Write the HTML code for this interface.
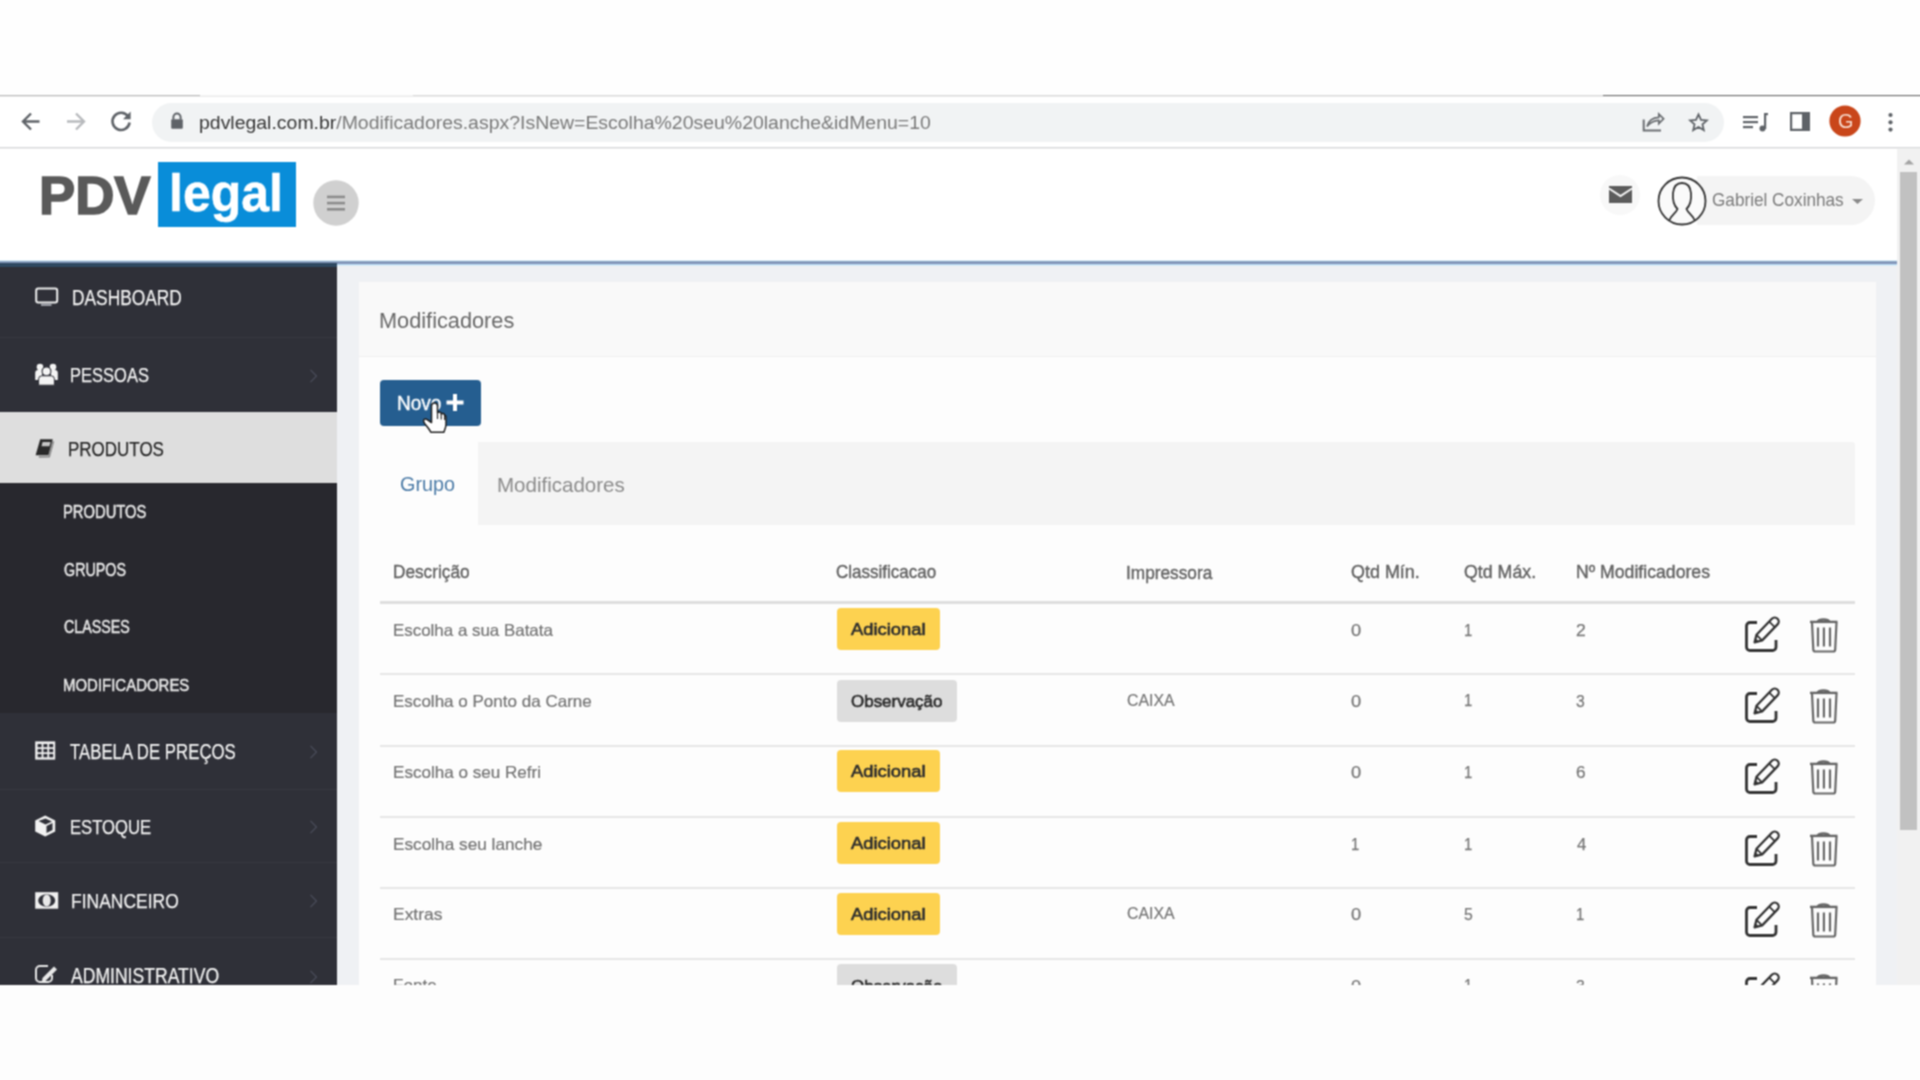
<!DOCTYPE html>
<html><head><meta charset="utf-8"><style>
*{margin:0;padding:0;box-sizing:border-box}
html,body{width:1920px;height:1080px;overflow:hidden;background:#fdfdfd;font-family:"Liberation Sans",sans-serif}
.a{position:absolute}
.t{position:absolute;white-space:nowrap;line-height:1;transform-origin:0 0}
svg{position:absolute;overflow:visible}
</style></head><body>
<svg width="0" height="0" style="position:absolute"><filter id="bl" x="0" y="0" width="100%" height="100%" color-interpolation-filters="sRGB"><feConvolveMatrix order="3" kernelMatrix="1 2 1 2 4 2 1 2 1" divisor="16" edgeMode="duplicate" preserveAlpha="true"/></filter></svg>
<div id="root" style="position:absolute;left:0;top:0;width:1920px;height:1080px;overflow:hidden;background:#fdfdfd;filter:url(#bl)">
<div class="a" style="left:0px;top:0px;width:1920px;height:96px;background:#fefefe;"></div>
<div class="a" style="left:0px;top:95px;width:200px;height:1px;background:#b8b8b8;"></div>
<div class="a" style="left:200px;top:95px;width:213px;height:1px;background:#f2f2f2;"></div>
<div class="a" style="left:413px;top:95px;width:1190px;height:1px;background:#d9d9d9;"></div>
<div class="a" style="left:1603px;top:95px;width:317px;height:1px;background:#6a6a6a;"></div>
<div class="a" style="left:0px;top:96px;width:1920px;height:1px;background:#ececec;"></div>
<div class="a" style="left:0px;top:97px;width:1920px;height:51px;background:#ffffff;"></div>
<div class="a" style="left:0px;top:147px;width:1920px;height:1px;background:#d6d7d9;"></div>
<div class="a" style="left:0px;top:148px;width:1920px;height:1px;background:#ededed;"></div>
<div class="a" style="left:152px;top:103px;width:1572px;height:39px;background:#f1f3f4;border-radius:20px"></div>
<svg style="left:0;top:97px" width="160" height="50" viewBox="0 0 160 50">
<g fill="none" stroke-linecap="butt" stroke-linejoin="miter">
<path d="M39.5 24.5H23 M31 16.5L23 24.5L31 32.5" stroke="#5f6368" stroke-width="2.4"/>
<path d="M67 24.5H84 M76 16.5L84 24.5L76 32.5" stroke="#b8babd" stroke-width="2.4"/>
<path d="M128.2 19.5A8.6 8.6 0 1 0 129.6 25.5" stroke="#5f6368" stroke-width="2.6"/>
</g>
<path d="M130.6 14.6V22.2H123Z" fill="#5f6368"/>
</svg>
<svg style="left:170px;top:112px" width="14" height="18" viewBox="0 0 14 18">
<path d="M3.4 7.5V5.2A3.6 3.6 0 0 1 10.6 5.2V7.5" fill="none" stroke="#5f6368" stroke-width="2"/>
<rect x="1.2" y="7.2" width="11.6" height="9.6" rx="1" fill="#5f6368"/>
</svg>
<div class="t" style="left:199.13px;top:112.88px;font-size:19.03px;color:#202124;transform:scaleX(1.0226);"><span style="color:#363636">pdvlegal.com.br</span><span style="color:#7a7a7a">/Modificadores.aspx?IsNew=Escolha%20seu%20lanche&amp;idMenu=10</span></div>
<svg style="left:1630px;top:97px" width="290" height="50" viewBox="0 0 290 50">
<g fill="none" stroke="#5f6368" stroke-width="2">
<path d="M13.7 22.5V33.4H31" stroke="#6a6d71"/>
<path d="M17 29.5C18.5 23.5 23 20.5 28.8 20.3V17L33.6 21.8L28.8 26.6V23.4C24 23.5 20.5 25.3 17 29.5Z" stroke-width="1.7" stroke="#6a6d71"/>
<path d="M68.5 16.5L71.3 22.6L77.8 23.2L72.9 27.6L74.4 34L68.5 30.6L62.6 34L64.1 27.6L59.2 23.2L65.7 22.6Z" stroke-width="2" transform="translate(68.5 25.3) scale(0.9) translate(-68.5 -25.3)"/>
</g>
<g fill="#5f6368">
<rect x="113" y="19" width="15" height="2.2"/><rect x="113" y="24" width="15" height="2.2"/><rect x="113" y="29" width="10" height="2.2"/>
<rect x="134" y="16" width="2.2" height="16"/><rect x="134" y="16" width="4" height="2.2"/><circle cx="132.5" cy="31.5" r="3"/>
<path d="M160 15H180V34H160ZM162.2 17.2V31.8H172V17.2Z" fill-rule="evenodd"/>
</g>
<circle cx="215" cy="24" r="15.6" fill="#c9461a"/>
<circle cx="260.5" cy="18" r="2.1" fill="#5f6368"/><circle cx="260.5" cy="25.3" r="2.1" fill="#5f6368"/><circle cx="260.5" cy="32.6" r="2.1" fill="#5f6368"/>
</svg>
<div class="t" style="left:1837.51px;top:111.93px;font-size:19.57px;color:#f7dccf;transform:scaleX(1.0141);">G</div>
<div class="a" style="left:0px;top:149px;width:1897px;height:836px;background:#ffffff;"></div>
<div class="t" style="left:39.27px;top:168.03px;font-size:54.06px;color:#5a5a5a;font-weight:700;transform:scaleX(1.0037);-webkit-text-stroke:1.6px #5a5a5a;">PDV</div>
<div class="a" style="left:158px;top:162px;width:138px;height:65px;background:#098dd9;"></div>
<div class="t" style="left:168.70px;top:167.92px;font-size:51.59px;color:#ffffff;font-weight:700;transform:scaleX(0.9693);-webkit-text-stroke:0.5px #ffffff;">legal</div>
<svg style="left:313px;top:180px" width="46" height="46" viewBox="0 0 46 46">
<circle cx="23" cy="23" r="22.7" fill="#d0d0d0"/>
<g fill="#8c8c8c"><rect x="14" y="15.6" width="18" height="2.6"/><rect x="14" y="21.8" width="18" height="2.6"/><rect x="14" y="28" width="18" height="2.6"/></g>
</svg>
<svg style="left:1598px;top:174px" width="46" height="42" viewBox="0 0 46 42">
<circle cx="22" cy="21" r="20" fill="#f8f8f8"/>
<path d="M11 12H34V29H11Z" fill="#5c5c5c"/>
<path d="M11 14.5L22.5 22L34 14.5" fill="none" stroke="#f8f8f8" stroke-width="2"/>
</svg>
<div class="a" style="left:1697px;top:176px;width:178px;height:49px;background:#f4f4f4;border-radius:0 25px 25px 0"></div>
<svg style="left:1656px;top:175px" width="52" height="52" viewBox="0 0 52 52">
<circle cx="26" cy="26" r="23.5" fill="#fafafa" stroke="#333" stroke-width="1.8"/>
<path d="M13.5 45C15.5 40 20 38 21.5 34C17.5 30 16.5 24 17 18C17.8 11 21.5 8 26 8C30.5 8 34.2 11 35 18C35.5 24 34.5 30 30.5 34C32 38 36.5 40 38.5 45" fill="none" stroke="#333" stroke-width="1.8"/>
</svg>
<div class="t" style="left:1711.54px;top:192.23px;font-size:17.79px;color:#7a7a7a;transform:scaleX(0.9655);">Gabriel Coxinhas</div>
<svg style="left:1852px;top:199px" width="11" height="5" viewBox="0 0 11 5"><path d="M0 0H11L5.5 5Z" fill="#8a8a8a"/></svg>
<div class="a" style="left:337px;top:266px;width:1560px;height:719px;background:#eff1f4;"></div>
<div class="a" style="left:359px;top:282px;width:1517px;height:703px;background:#fdfdfd;"></div>
<div class="a" style="left:359px;top:282px;width:1517px;height:74px;background:#f9f9f9;"></div>
<div class="a" style="left:359px;top:356px;width:1517px;height:1px;background:#efefef;"></div>
<div class="t" style="left:378.86px;top:308.73px;font-size:22.76px;color:#686868;transform:scaleX(0.9550);">Modificadores</div>
<div class="a" style="left:380px;top:380px;width:101px;height:46px;background:#255e90;border-radius:4px"></div>
<div class="t" style="left:397.28px;top:392.75px;font-size:20.72px;color:#ffffff;transform:scaleX(0.9193);-webkit-text-stroke:0.35px #ffffff;">Novo</div>
<svg style="left:446px;top:394px" width="18" height="17" viewBox="0 0 18 17"><path d="M7 0H11V6.5H17.5V10.5H11V17H7V10.5H0.5V6.5H7Z" fill="#fff"/></svg>
<div class="a" style="left:478px;top:442px;width:1377px;height:83px;background:#f4f4f4;border-radius:0 3px 0 0"></div>
<div class="t" style="left:400.41px;top:473.64px;font-size:20.86px;color:#4a7aa6;transform:scaleX(0.9482);">Grupo</div>
<div class="t" style="left:497.36px;top:474.13px;font-size:21.10px;color:#8a8a8a;transform:scaleX(0.9733);">Modificadores</div>
<div class="t" style="left:392.92px;top:564.32px;font-size:17.93px;color:#636363;transform:scaleX(0.9606);-webkit-text-stroke:0.4px #636363;">Descrição</div>
<div class="t" style="left:836.45px;top:564.32px;font-size:17.93px;color:#636363;transform:scaleX(0.9490);-webkit-text-stroke:0.4px #636363;">Classificacao</div>
<div class="t" style="left:1126.05px;top:563.55px;font-size:18.84px;color:#636363;transform:scaleX(0.9156);-webkit-text-stroke:0.4px #636363;">Impressora</div>
<div class="t" style="left:1351.09px;top:564.32px;font-size:17.93px;color:#636363;-webkit-text-stroke:0.4px #636363;">Qtd Mín.</div>
<div class="t" style="left:1463.50px;top:564.32px;font-size:17.93px;color:#636363;transform:scaleX(0.9916);-webkit-text-stroke:0.4px #636363;">Qtd Máx.</div>
<div class="t" style="left:1575.59px;top:564.32px;font-size:17.93px;color:#636363;transform:scaleX(0.9848);-webkit-text-stroke:0.4px #636363;">Nº Modificadores</div>
<div class="a" style="left:380px;top:601px;width:1475px;height:3px;background:#dedede;"></div>
<div class="a" style="left:380px;top:673px;width:1475px;height:2px;background:#e6e6e6;"></div>
<div class="a" style="left:380px;top:745px;width:1475px;height:2px;background:#e6e6e6;"></div>
<div class="a" style="left:380px;top:816px;width:1475px;height:2px;background:#e6e6e6;"></div>
<div class="a" style="left:380px;top:887px;width:1475px;height:2px;background:#e6e6e6;"></div>
<div class="a" style="left:380px;top:958px;width:1475px;height:2px;background:#e6e6e6;"></div>
<div class="a" style="left:359px;top:0;width:1517px;height:985px;overflow:hidden" id="rows">
<div class="t" style="left:34.05px;top:622.42px;font-size:16.28px;color:#747474;transform:scaleX(1.0400);-webkit-text-stroke:0.2px #747474;">Escolha a sua Batata</div>
<div class="a" style="left:478px;top:608px;width:103px;height:42px;background:#fdd250;border-radius:4px"></div>
<div class="t" style="left:492.30px;top:621.48px;font-size:17.38px;color:#2e2e2e;transform:scaleX(1.0585);-webkit-text-stroke:0.65px #2e2e2e;">Adicional</div>
<div class="t" style="left:992.27px;top:622.09px;font-size:17.14px;color:#777777;transform:scaleX(1.0694);-webkit-text-stroke:0.25px #777777;">0</div>
<div class="t" style="left:1104.88px;top:621.87px;font-size:17.39px;color:#777777;transform:scaleX(0.8592);-webkit-text-stroke:0.25px #777777;">1</div>
<div class="t" style="left:1217.12px;top:622.09px;font-size:17.14px;color:#777777;transform:scaleX(1.0256);-webkit-text-stroke:0.25px #777777;">2</div>
<svg style="left:1383px;top:618.0px" width="100" height="36" viewBox="0 0 100 36">
<g fill="none" stroke="#333" stroke-width="2.8" stroke-linejoin="round">
<path d="M15 4.5H8A3.5 3.5 0 0 0 4.5 8V29A3.5 3.5 0 0 0 8 32.5H30.5A3.5 3.5 0 0 0 34 29V22"/>
<path d="M12.6 24.3L14.52 16.72L29.87 0.77A4 4 0 0 1 35.53 6.43L20.18 22.38Z" stroke-width="2.3"/>
<path d="M27.2 3.6L32.8 9.2M14.6 17L20 22.4" stroke-width="1.8"/>
</g>
<path d="M12.4 24.5L13.6 20.2L16.8 23.4Z" fill="#333"/>
<g fill="none" stroke="#666" stroke-width="2.2">
<path d="M68 3.9H95.5" stroke-width="2.4"/>
<path d="M75.5 4C77 0.6 86 0.6 87.5 4" stroke-width="2.4"/>
<path d="M70 4.5L71.3 31.5A2 2 0 0 0 73.3 33.5H91.2A2 2 0 0 0 93.2 31.5L94.5 4.5"/>
<path d="M76 9.5V28.6M81.9 9.5V28.6M88 9.5V28.6" stroke-width="2.2"/>
</g>
</svg>
<div class="t" style="left:34.04px;top:693.02px;font-size:16.28px;color:#747474;transform:scaleX(1.0469);-webkit-text-stroke:0.2px #747474;">Escolha o Ponto da Carne</div>
<div class="a" style="left:478px;top:680px;width:120px;height:42px;background:#dddddd;border-radius:4px"></div>
<div class="t" style="left:491.74px;top:692.68px;font-size:17.38px;color:#2e2e2e;transform:scaleX(0.9773);-webkit-text-stroke:0.65px #2e2e2e;">Observação</div>
<div class="t" style="left:767.81px;top:692.53px;font-size:16.86px;color:#747474;transform:scaleX(0.9431);-webkit-text-stroke:0.2px #747474;">CAIXA</div>
<div class="t" style="left:992.27px;top:692.69px;font-size:17.14px;color:#777777;transform:scaleX(1.0694);-webkit-text-stroke:0.25px #777777;">0</div>
<div class="t" style="left:1104.88px;top:692.47px;font-size:17.39px;color:#777777;transform:scaleX(0.8592);-webkit-text-stroke:0.25px #777777;">1</div>
<div class="t" style="left:1217.37px;top:692.69px;font-size:17.14px;color:#777777;transform:scaleX(0.9211);-webkit-text-stroke:0.25px #777777;">3</div>
<svg style="left:1383px;top:689.2px" width="100" height="36" viewBox="0 0 100 36">
<g fill="none" stroke="#333" stroke-width="2.8" stroke-linejoin="round">
<path d="M15 4.5H8A3.5 3.5 0 0 0 4.5 8V29A3.5 3.5 0 0 0 8 32.5H30.5A3.5 3.5 0 0 0 34 29V22"/>
<path d="M12.6 24.3L14.52 16.72L29.87 0.77A4 4 0 0 1 35.53 6.43L20.18 22.38Z" stroke-width="2.3"/>
<path d="M27.2 3.6L32.8 9.2M14.6 17L20 22.4" stroke-width="1.8"/>
</g>
<path d="M12.4 24.5L13.6 20.2L16.8 23.4Z" fill="#333"/>
<g fill="none" stroke="#666" stroke-width="2.2">
<path d="M68 3.9H95.5" stroke-width="2.4"/>
<path d="M75.5 4C77 0.6 86 0.6 87.5 4" stroke-width="2.4"/>
<path d="M70 4.5L71.3 31.5A2 2 0 0 0 73.3 33.5H91.2A2 2 0 0 0 93.2 31.5L94.5 4.5"/>
<path d="M76 9.5V28.6M81.9 9.5V28.6M88 9.5V28.6" stroke-width="2.2"/>
</g>
</svg>
<div class="t" style="left:34.03px;top:764.32px;font-size:16.28px;color:#747474;transform:scaleX(1.0494);-webkit-text-stroke:0.2px #747474;">Escolha o seu Refri</div>
<div class="a" style="left:478px;top:750px;width:103px;height:42px;background:#fdd250;border-radius:4px"></div>
<div class="t" style="left:492.30px;top:763.38px;font-size:17.38px;color:#2e2e2e;transform:scaleX(1.0585);-webkit-text-stroke:0.65px #2e2e2e;">Adicional</div>
<div class="t" style="left:992.27px;top:763.99px;font-size:17.14px;color:#777777;transform:scaleX(1.0694);-webkit-text-stroke:0.25px #777777;">0</div>
<div class="t" style="left:1104.88px;top:763.77px;font-size:17.39px;color:#777777;transform:scaleX(0.8592);-webkit-text-stroke:0.25px #777777;">1</div>
<div class="t" style="left:1217.14px;top:763.99px;font-size:17.14px;color:#777777;transform:scaleX(1.0036);-webkit-text-stroke:0.25px #777777;">6</div>
<svg style="left:1383px;top:760.4px" width="100" height="36" viewBox="0 0 100 36">
<g fill="none" stroke="#333" stroke-width="2.8" stroke-linejoin="round">
<path d="M15 4.5H8A3.5 3.5 0 0 0 4.5 8V29A3.5 3.5 0 0 0 8 32.5H30.5A3.5 3.5 0 0 0 34 29V22"/>
<path d="M12.6 24.3L14.52 16.72L29.87 0.77A4 4 0 0 1 35.53 6.43L20.18 22.38Z" stroke-width="2.3"/>
<path d="M27.2 3.6L32.8 9.2M14.6 17L20 22.4" stroke-width="1.8"/>
</g>
<path d="M12.4 24.5L13.6 20.2L16.8 23.4Z" fill="#333"/>
<g fill="none" stroke="#666" stroke-width="2.2">
<path d="M68 3.9H95.5" stroke-width="2.4"/>
<path d="M75.5 4C77 0.6 86 0.6 87.5 4" stroke-width="2.4"/>
<path d="M70 4.5L71.3 31.5A2 2 0 0 0 73.3 33.5H91.2A2 2 0 0 0 93.2 31.5L94.5 4.5"/>
<path d="M76 9.5V28.6M81.9 9.5V28.6M88 9.5V28.6" stroke-width="2.2"/>
</g>
</svg>
<div class="t" style="left:34.02px;top:836.42px;font-size:16.28px;color:#747474;transform:scaleX(1.0584);-webkit-text-stroke:0.2px #747474;">Escolha seu lanche</div>
<div class="a" style="left:478px;top:822px;width:103px;height:42px;background:#fdd250;border-radius:4px"></div>
<div class="t" style="left:492.30px;top:835.48px;font-size:17.38px;color:#2e2e2e;transform:scaleX(1.0585);-webkit-text-stroke:0.65px #2e2e2e;">Adicional</div>
<div class="t" style="left:991.88px;top:835.87px;font-size:17.39px;color:#777777;transform:scaleX(0.8592);-webkit-text-stroke:0.25px #777777;">1</div>
<div class="t" style="left:1104.88px;top:835.87px;font-size:17.39px;color:#777777;transform:scaleX(0.8592);-webkit-text-stroke:0.25px #777777;">1</div>
<div class="t" style="left:1217.66px;top:835.87px;font-size:17.39px;color:#777777;transform:scaleX(0.9678);-webkit-text-stroke:0.25px #777777;">4</div>
<svg style="left:1383px;top:831.6px" width="100" height="36" viewBox="0 0 100 36">
<g fill="none" stroke="#333" stroke-width="2.8" stroke-linejoin="round">
<path d="M15 4.5H8A3.5 3.5 0 0 0 4.5 8V29A3.5 3.5 0 0 0 8 32.5H30.5A3.5 3.5 0 0 0 34 29V22"/>
<path d="M12.6 24.3L14.52 16.72L29.87 0.77A4 4 0 0 1 35.53 6.43L20.18 22.38Z" stroke-width="2.3"/>
<path d="M27.2 3.6L32.8 9.2M14.6 17L20 22.4" stroke-width="1.8"/>
</g>
<path d="M12.4 24.5L13.6 20.2L16.8 23.4Z" fill="#333"/>
<g fill="none" stroke="#666" stroke-width="2.2">
<path d="M68 3.9H95.5" stroke-width="2.4"/>
<path d="M75.5 4C77 0.6 86 0.6 87.5 4" stroke-width="2.4"/>
<path d="M70 4.5L71.3 31.5A2 2 0 0 0 73.3 33.5H91.2A2 2 0 0 0 93.2 31.5L94.5 4.5"/>
<path d="M76 9.5V28.6M81.9 9.5V28.6M88 9.5V28.6" stroke-width="2.2"/>
</g>
</svg>
<div class="t" style="left:34.00px;top:906.12px;font-size:17.10px;color:#747474;transform:scaleX(1.0212);-webkit-text-stroke:0.2px #747474;">Extras</div>
<div class="a" style="left:478px;top:893px;width:103px;height:42px;background:#fdd250;border-radius:4px"></div>
<div class="t" style="left:492.30px;top:905.88px;font-size:17.38px;color:#2e2e2e;transform:scaleX(1.0585);-webkit-text-stroke:0.65px #2e2e2e;">Adicional</div>
<div class="t" style="left:767.81px;top:906.33px;font-size:16.86px;color:#747474;transform:scaleX(0.9431);-webkit-text-stroke:0.2px #747474;">CAIXA</div>
<div class="t" style="left:992.27px;top:906.49px;font-size:17.14px;color:#777777;transform:scaleX(1.0694);-webkit-text-stroke:0.25px #777777;">0</div>
<div class="t" style="left:1105.37px;top:906.27px;font-size:17.39px;color:#777777;transform:scaleX(0.9079);-webkit-text-stroke:0.25px #777777;">5</div>
<div class="t" style="left:1216.88px;top:906.27px;font-size:17.39px;color:#777777;transform:scaleX(0.8592);-webkit-text-stroke:0.25px #777777;">1</div>
<svg style="left:1383px;top:902.8px" width="100" height="36" viewBox="0 0 100 36">
<g fill="none" stroke="#333" stroke-width="2.8" stroke-linejoin="round">
<path d="M15 4.5H8A3.5 3.5 0 0 0 4.5 8V29A3.5 3.5 0 0 0 8 32.5H30.5A3.5 3.5 0 0 0 34 29V22"/>
<path d="M12.6 24.3L14.52 16.72L29.87 0.77A4 4 0 0 1 35.53 6.43L20.18 22.38Z" stroke-width="2.3"/>
<path d="M27.2 3.6L32.8 9.2M14.6 17L20 22.4" stroke-width="1.8"/>
</g>
<path d="M12.4 24.5L13.6 20.2L16.8 23.4Z" fill="#333"/>
<g fill="none" stroke="#666" stroke-width="2.2">
<path d="M68 3.9H95.5" stroke-width="2.4"/>
<path d="M75.5 4C77 0.6 86 0.6 87.5 4" stroke-width="2.4"/>
<path d="M70 4.5L71.3 31.5A2 2 0 0 0 73.3 33.5H91.2A2 2 0 0 0 93.2 31.5L94.5 4.5"/>
<path d="M76 9.5V28.6M81.9 9.5V28.6M88 9.5V28.6" stroke-width="2.2"/>
</g>
</svg>
<div class="t" style="left:34.03px;top:977.32px;font-size:17.10px;color:#747474;-webkit-text-stroke:0.2px #747474;">Fonte</div>
<div class="a" style="left:478px;top:964px;width:120px;height:42px;background:#dddddd;border-radius:4px"></div>
<div class="t" style="left:491.74px;top:977.68px;font-size:17.38px;color:#2e2e2e;transform:scaleX(0.9773);-webkit-text-stroke:0.65px #2e2e2e;">Observação</div>
<div class="t" style="left:992.27px;top:977.69px;font-size:17.14px;color:#777777;transform:scaleX(1.0694);-webkit-text-stroke:0.25px #777777;">0</div>
<div class="t" style="left:1104.88px;top:977.47px;font-size:17.39px;color:#777777;transform:scaleX(0.8592);-webkit-text-stroke:0.25px #777777;">1</div>
<div class="t" style="left:1217.37px;top:977.69px;font-size:17.14px;color:#777777;transform:scaleX(0.9211);-webkit-text-stroke:0.25px #777777;">3</div>
<svg style="left:1383px;top:974.0px" width="100" height="36" viewBox="0 0 100 36">
<g fill="none" stroke="#333" stroke-width="2.8" stroke-linejoin="round">
<path d="M15 4.5H8A3.5 3.5 0 0 0 4.5 8V29A3.5 3.5 0 0 0 8 32.5H30.5A3.5 3.5 0 0 0 34 29V22"/>
<path d="M12.6 24.3L14.52 16.72L29.87 0.77A4 4 0 0 1 35.53 6.43L20.18 22.38Z" stroke-width="2.3"/>
<path d="M27.2 3.6L32.8 9.2M14.6 17L20 22.4" stroke-width="1.8"/>
</g>
<path d="M12.4 24.5L13.6 20.2L16.8 23.4Z" fill="#333"/>
<g fill="none" stroke="#666" stroke-width="2.2">
<path d="M68 3.9H95.5" stroke-width="2.4"/>
<path d="M75.5 4C77 0.6 86 0.6 87.5 4" stroke-width="2.4"/>
<path d="M70 4.5L71.3 31.5A2 2 0 0 0 73.3 33.5H91.2A2 2 0 0 0 93.2 31.5L94.5 4.5"/>
<path d="M76 9.5V28.6M81.9 9.5V28.6M88 9.5V28.6" stroke-width="2.2"/>
</g>
</svg>
</div>
<div class="a" style="left:0px;top:261px;width:337px;height:724px;background:#2f3038;"></div>
<div class="a" style="left:0px;top:483px;width:337px;height:230px;background:#28282e;"></div>
<div class="a" style="left:0px;top:412px;width:337px;height:71px;background:#dedede;"></div>
<div class="a" style="left:0px;top:337px;width:337px;height:1px;background:#37383f;"></div>
<div class="a" style="left:0px;top:789px;width:337px;height:1px;background:#37383f;"></div>
<div class="a" style="left:0px;top:862px;width:337px;height:1px;background:#37383f;"></div>
<div class="a" style="left:0px;top:937px;width:337px;height:1px;background:#37383f;"></div>
<div class="a" style="left:0;top:0;width:337px;height:985px;overflow:hidden">
<div class="t" style="left:71.91px;top:286.75px;font-size:22.14px;color:#f2f2f2;transform:scaleX(0.7832);-webkit-text-stroke:0.25px #f2f2f2;">DASHBOARD</div>
<div class="t" style="left:70.18px;top:364.82px;font-size:20.29px;color:#f2f2f2;transform:scaleX(0.8144);-webkit-text-stroke:0.25px #f2f2f2;">PESSOAS</div>
<div class="t" style="left:68.14px;top:439.16px;font-size:20.71px;color:#262626;transform:scaleX(0.8203);-webkit-text-stroke:0.25px #262626;">PRODUTOS</div>
<div class="t" style="left:69.66px;top:741.37px;font-size:22.00px;color:#f2f2f2;transform:scaleX(0.7631);-webkit-text-stroke:0.25px #f2f2f2;">TABELA DE PREÇOS</div>
<div class="t" style="left:69.97px;top:816.82px;font-size:20.29px;color:#f2f2f2;transform:scaleX(0.8209);-webkit-text-stroke:0.25px #f2f2f2;">ESTOQUE</div>
<div class="t" style="left:70.60px;top:890.70px;font-size:20.43px;color:#f2f2f2;transform:scaleX(0.8558);-webkit-text-stroke:0.25px #f2f2f2;">FINANCEIRO</div>
<div class="t" style="left:70.50px;top:965.86px;font-size:21.43px;color:#f2f2f2;transform:scaleX(0.8203);-webkit-text-stroke:0.25px #f2f2f2;">ADMINISTRATIVO</div>
<div class="t" style="left:63.22px;top:504.14px;font-size:17.43px;color:#e6e6e6;transform:scaleX(0.8482);-webkit-text-stroke:0.5px #e6e6e6;">PRODUTOS</div>
<div class="t" style="left:63.68px;top:561.82px;font-size:17.57px;color:#e6e6e6;transform:scaleX(0.8144);-webkit-text-stroke:0.5px #e6e6e6;">GRUPOS</div>
<div class="t" style="left:63.69px;top:619.40px;font-size:17.71px;color:#e6e6e6;transform:scaleX(0.8065);-webkit-text-stroke:0.5px #e6e6e6;">CLASSES</div>
<div class="t" style="left:63.20px;top:677.49px;font-size:17.14px;color:#e6e6e6;transform:scaleX(0.8736);-webkit-text-stroke:0.5px #e6e6e6;">MODIFICADORES</div>
<svg style="left:309px;top:369.0px" width="10" height="14" viewBox="0 0 10 14"><path d="M1.5 0.8L7.5 7L1.5 13.2" fill="none" stroke="#4a4d5a" stroke-width="1.2"/></svg>
<svg style="left:309px;top:745.0px" width="10" height="14" viewBox="0 0 10 14"><path d="M1.5 0.8L7.5 7L1.5 13.2" fill="none" stroke="#4a4d5a" stroke-width="1.2"/></svg>
<svg style="left:309px;top:820.0px" width="10" height="14" viewBox="0 0 10 14"><path d="M1.5 0.8L7.5 7L1.5 13.2" fill="none" stroke="#4a4d5a" stroke-width="1.2"/></svg>
<svg style="left:309px;top:894.0px" width="10" height="14" viewBox="0 0 10 14"><path d="M1.5 0.8L7.5 7L1.5 13.2" fill="none" stroke="#4a4d5a" stroke-width="1.2"/></svg>
<svg style="left:309px;top:970.0px" width="10" height="14" viewBox="0 0 10 14"><path d="M1.5 0.8L7.5 7L1.5 13.2" fill="none" stroke="#4a4d5a" stroke-width="1.2"/></svg>
<svg style="left:0;top:0" width="70" height="990" viewBox="0 0 70 990">
<rect x="36.2" y="288.6" width="21" height="14" rx="2" fill="none" stroke="#eeeeee" stroke-width="2"/>
<rect x="41" y="303.5" width="10.5" height="2.5" fill="#9a9ca4"/>
<g fill="#f4f4f4">
<circle cx="40" cy="367" r="3.3"/><circle cx="53" cy="367" r="3.3"/>
<path d="M35.2 380V373A3 3 0 0 1 38.2 370H42V380Z"/>
<path d="M57.8 380V373A3 3 0 0 0 54.8 370H51V380Z"/>
<circle cx="46.5" cy="371.3" r="4.4" stroke="#2f3038" stroke-width="1.1"/>
<path d="M38.6 385.2V379A3.2 3.2 0 0 1 41.8 375.8H51.2A3.2 3.2 0 0 1 54.4 379V385.2Z" stroke="#2f3038" stroke-width="1"/>
</g>
<path d="M38.8 456.8L49.2 456.6L53.4 441.2" fill="none" stroke="#8f8f8f" stroke-width="1.8"/>
<path d="M40.2 439.3H52.8L48.4 455.2H35.6Z" fill="#2a2a2a"/>
<path d="M42.6 442H50.6L49.5 446.2H41.5Z" fill="#c4c4c4"/>
<g>
<rect x="35.2" y="741.4" width="20" height="18.2" fill="#f0f0f0"/>
<g fill="#2f3038">
<rect x="37.6" y="744" width="4" height="3.3"/><rect x="43.4" y="744" width="4" height="3.3"/><rect x="49.2" y="744" width="4" height="3.3"/>
<rect x="37.6" y="749" width="4" height="3.3"/><rect x="43.4" y="749" width="4" height="3.3"/><rect x="49.2" y="749" width="4" height="3.3"/>
<rect x="37.6" y="754" width="4" height="3.3"/><rect x="43.4" y="754" width="4" height="3.3"/><rect x="49.2" y="754" width="4" height="3.3"/>
</g>
</g>
<g>
<path d="M45.2 815.5L55.2 820.5V831.5L45.2 836.5L35.2 831.5V820.5Z" fill="#f2f2f2"/>
<path d="M38.5 821L45.5 824.5L52 821.5L45.5 818.5Z" fill="#2f3038"/>
<path d="M46.5 826V833L52.5 830V823Z" fill="#2f3038"/>
</g>
<g>
<rect x="35.2" y="892.2" width="23" height="16.5" fill="#f0f0f0"/>
<ellipse cx="46.7" cy="900.5" rx="8.5" ry="6.2" fill="#2f3038"/>
<ellipse cx="46.7" cy="900.5" rx="4" ry="6" fill="#e8e8e8"/>
</g>
<g fill="none" stroke="#e6e6e6" stroke-width="2">
<path d="M48 966H40A4 4 0 0 0 36 970V978A4 4 0 0 0 40 982H48A4 4 0 0 0 52 978V975"/>
</g>
<path d="M42.5 978L54 966.5L57 969.5L45.5 981L42 981.5Z" fill="#e8e8e8"/>
</svg>
</div>
<div class="a" style="left:0;top:260px;width:1897px;height:7px;background:linear-gradient(#e2f1fb 0,#e2f1fb 14.3%,#8aa7c2 14.3%,#8aa7c2 28.6%,#8193b6 28.6%,#8797bb 57.1%,#b6daf2 57.1%,#b6daf2 71.4%,#dcedf8 71.4%,#dcedf8 85.7%,#eff0f2 85.7%)"></div>
<div class="a" style="left:0px;top:263px;width:337px;height:4px;background:#2f4961;"></div>
<div class="a" style="left:1897px;top:149px;width:23px;height:836px;background:#f1f1f1;"></div>
<div class="a" style="left:1900px;top:172px;width:17px;height:658px;background:#c1c1c1;"></div>
<svg style="left:1903px;top:158px" width="12" height="7" viewBox="0 0 12 7"><path d="M1 6.5L6 1.5L11 6.5Z" fill="#a3a3a3"/></svg>
<svg style="left:421px;top:402px" width="28" height="32" viewBox="0 0 28 32">
<path d="M10.5 4A3 3 0 0 1 16.5 4V10.8A2.2 2.2 0 0 1 20.2 11.2V12A2 2 0 0 1 23.6 13.2A1.8 1.8 0 0 1 25 15V22.5C25 25.5 23.6 27.8 22.8 30.2H9.8C8.6 27.5 6.4 25 3.8 21.8C1.8 19.2 2.4 16.2 5.4 17.2L10.5 20.5Z" fill="#fff" stroke="#1e1e1e" stroke-width="1.5" stroke-linejoin="round"/>
<path d="M16.5 11V17M20.2 12V17.5M23.6 13.5V18" stroke="#1e1e1e" stroke-width="1.1"/>
</svg>
<div class="a" style="left:0px;top:985px;width:1920px;height:95px;background:#fdfdfd;"></div>
</div>
</body></html>
